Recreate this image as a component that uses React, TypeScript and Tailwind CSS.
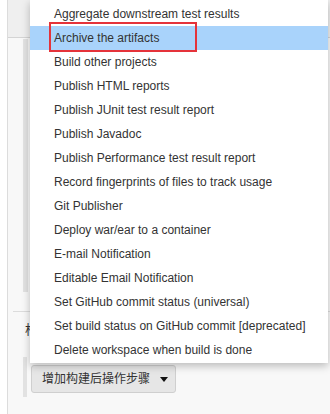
const items = [
	'Aggregate downstream test results',
	'Archive the artifacts',
	'Build other projects',
	'Publish HTML reports',
	'Publish JUnit test result report',
	'Publish Javadoc',
	'Publish Performance test result report',
	'Record fingerprints of files to track usage',
	'Git Publisher',
	'Deploy war/ear to a container',
	'E-mail Notification',
	'Editable Email Notification',
	'Set GitHub commit status (universal)',
	'Set build status on GitHub commit [deprecated]',
	'Delete workspace when build is done',
];

// Dropdown menu, open over the page
function Menu() {
	return (
		<div className="absolute left-[30px] top-0 w-[298px] bg-white pt-[2px] pb-[1px] shadow-[0_3px_8px_rgba(0,0,0,0.25)]">
			{items.map((label, i) => (
				<div
					key={label}
					className={
						i === 1
							? 'relative h-6 bg-[#a9d3fb] pl-6 text-[12px] leading-6 text-[#333]'
							: 'h-6 pl-6 text-[12px] leading-6 text-[#333]'
					}
				>
					{label}
					{i === 1 && (
						<div className="absolute left-[19px] top-[-4px] h-[30px] w-[148px] border-2 border-[#e5333a]" />
					)}
				</div>
			))}
		</div>
	);
}

export default function App() {
	return (
		<div
			className="relative h-[414px] w-[330px] overflow-hidden bg-white"
			style={{ fontFamily: '"Liberation Sans", Arial, "Noto Sans CJK SC", sans-serif' }}
		>
			<div className="ml-[7px] flex h-full flex-col border-l border-[#dcdcdc] bg-[#f8f8f8]">
				<div className="h-[38px] border-b border-[#d4d4d4] bg-[#efefef]" />
				<div className="flex h-[254px] pl-[15px] pt-[1px]">
					<div className="w-[5px] bg-[#e2e2e2]" />
				</div>
				<div className="ml-[5px] mt-[19px] border-t border-[#dcdcdc]" />
				<div className="ml-[17px] mt-[10px] w-[6px] overflow-hidden whitespace-nowrap text-[13px] leading-4 text-[#333]">
					构建后操作
				</div>
				<div className="mt-[27px] flex items-start pl-[15px]">
					<div className="mt-[-8px] h-[40px] w-[4px] bg-[#e2e2e2]" />
					<button
						type="button"
						className="ml-[4px] flex h-[28px] items-center gap-[10px] rounded-[3px] border border-[#cfcfcf] bg-[#e6e6e6] pl-[10px] pr-[7px] text-[12px] text-[#333]"
					>
						增加构建后操作步骤
						<svg width="8" height="5" viewBox="0 0 8 5">
							<path d="M0 0h8L4 5z" fill="#111" />
						</svg>
					</button>
				</div>
			</div>
			<Menu />
		</div>
	);
}
